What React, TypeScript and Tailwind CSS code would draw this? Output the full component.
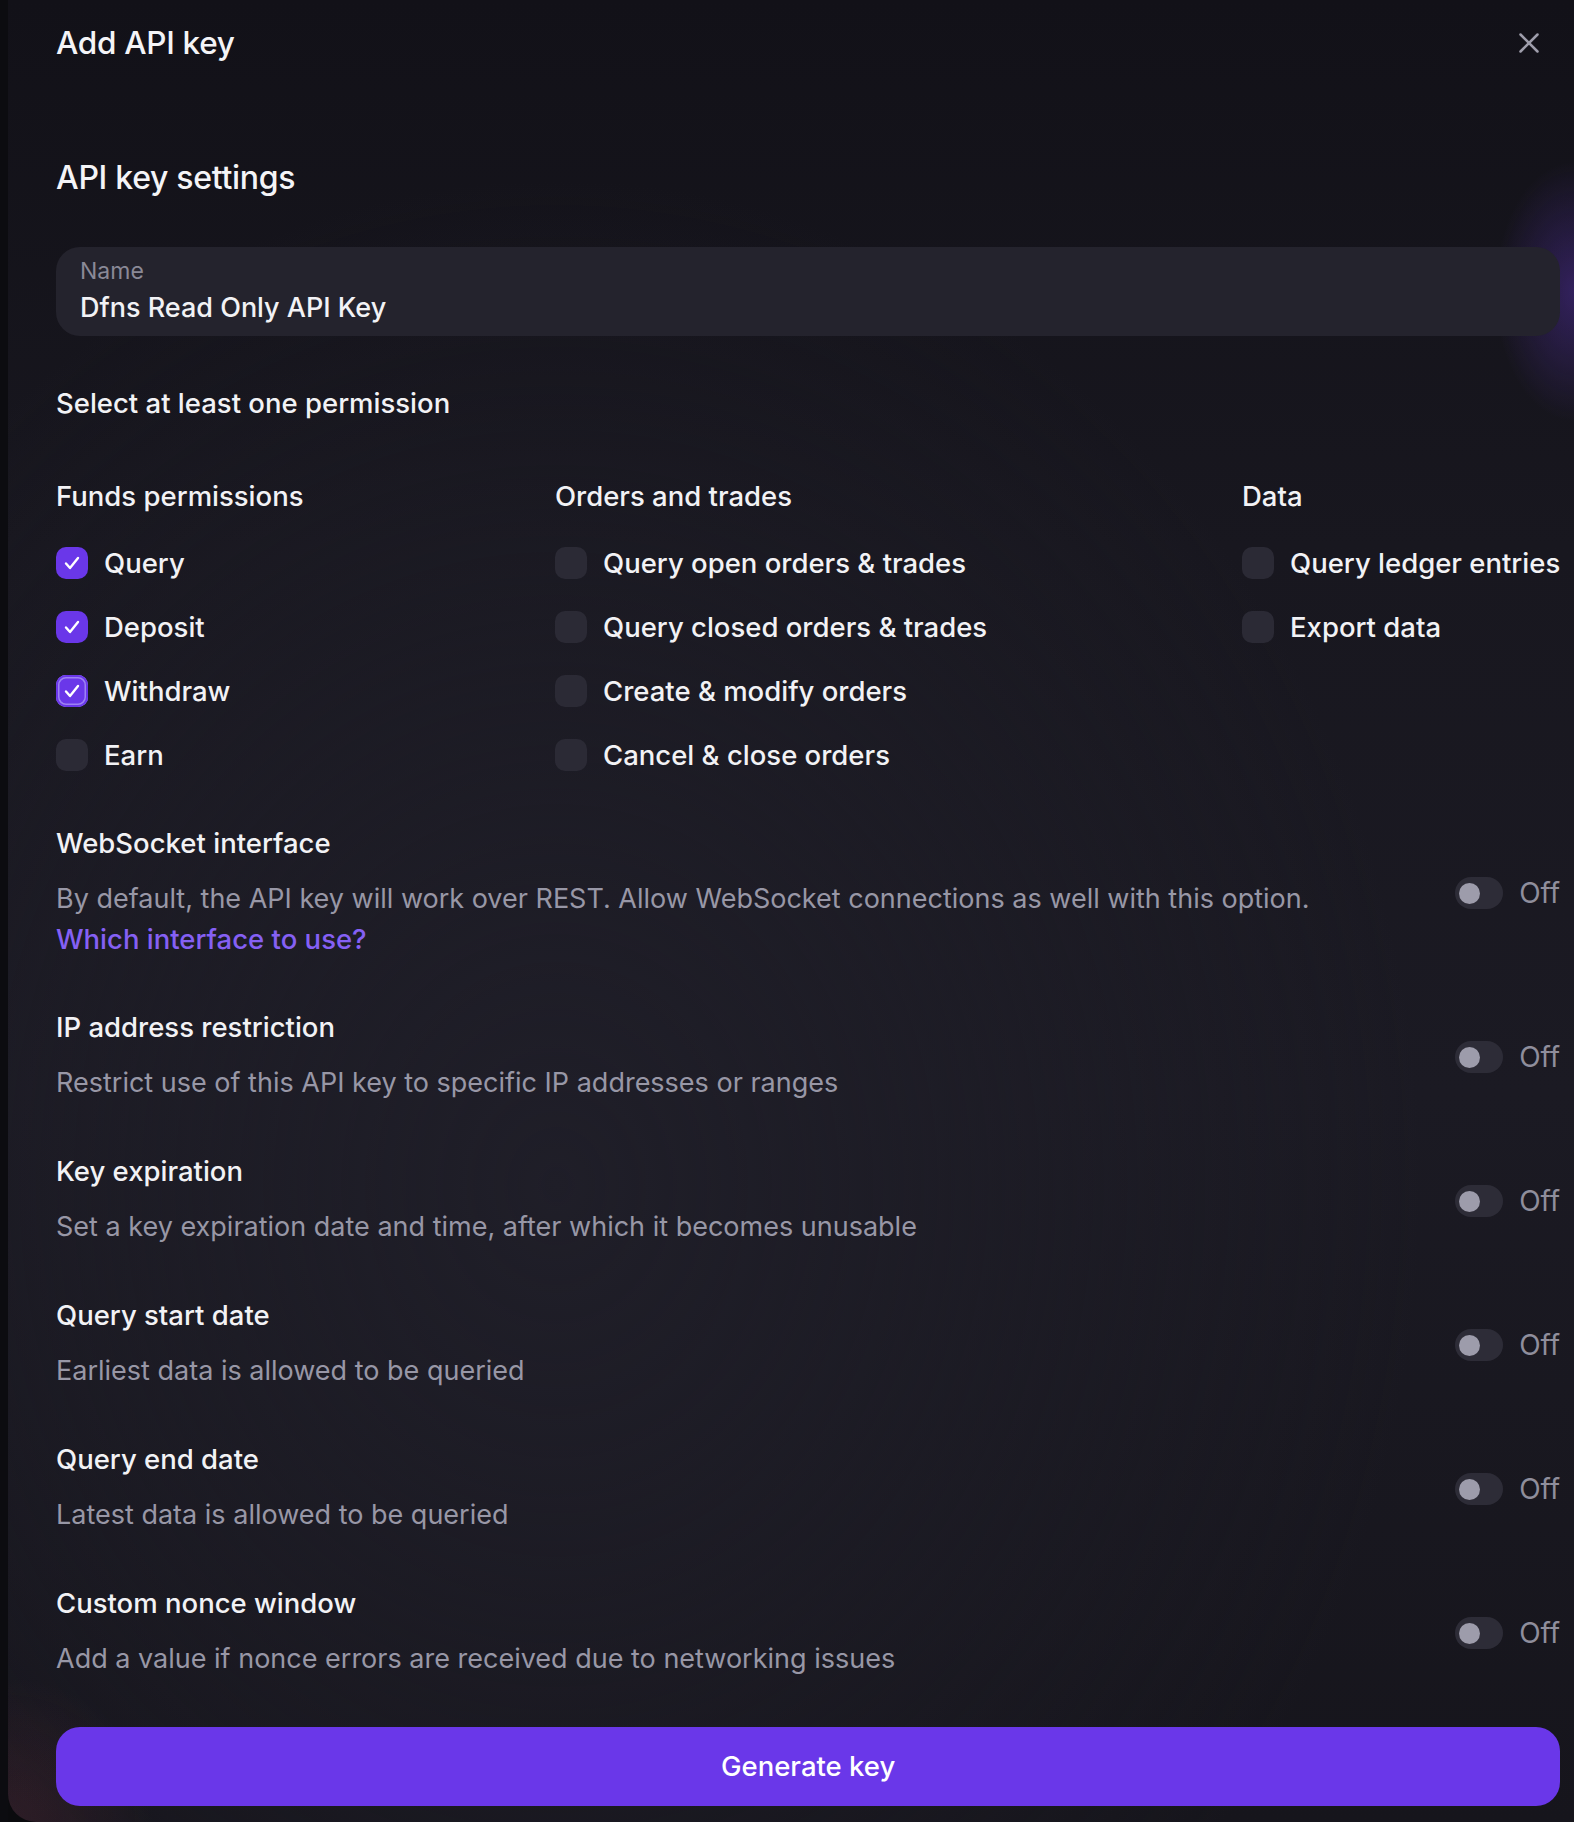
import React from 'react'

const font = { fontFamily: 'Inter, Roboto, "Noto Sans", sans-serif' }

type Perm = { label: string; checked?: boolean; focus?: boolean }

const columns: { title: string; items: Perm[] }[] = [
  {
    title: 'Funds permissions',
    items: [
      { label: 'Query', checked: true },
      { label: 'Deposit', checked: true },
      { label: 'Withdraw', checked: true, focus: true },
      { label: 'Earn' },
    ],
  },
  {
    title: 'Orders and trades',
    items: [
      { label: 'Query open orders & trades' },
      { label: 'Query closed orders & trades' },
      { label: 'Create & modify orders' },
      { label: 'Cancel & close orders' },
    ],
  },
  {
    title: 'Data',
    items: [{ label: 'Query ledger entries' }, { label: 'Export data' }],
  },
]

const options = [
  { title: 'IP address restriction', desc: 'Restrict use of this API key to specific IP addresses or ranges' },
  { title: 'Key expiration', desc: 'Set a key expiration date and time, after which it becomes unusable' },
  { title: 'Query start date', desc: 'Earliest data is allowed to be queried' },
  { title: 'Query end date', desc: 'Latest data is allowed to be queried' },
  { title: 'Custom nonce window', desc: 'Add a value if nonce errors are received due to networking issues' },
]

function Checkbox({ checked, focus }: { checked?: boolean; focus?: boolean }) {
  if (!checked) return <div className="w-8 h-8 rounded-[10px] bg-[#2b2a35] shrink-0" />
  return (
    <div
      className={`w-8 h-8 rounded-[10px] bg-[#6a37e9] shrink-0 flex items-center justify-center ${
        focus ? 'shadow-[inset_0_0_0_2px_#6a37e9,inset_0_0_0_3.5px_#9d82f3]' : ''
      }`}
    >
      <svg width="16" height="14" viewBox="0 0 16 14" fill="none">
        <path d="M2 7.5 L6 12 L14 2" stroke="white" strokeWidth="2.4" strokeLinecap="round" strokeLinejoin="round" />
      </svg>
    </div>
  )
}

function Toggle() {
  return (
    <div className="flex items-center gap-4 shrink-0">
      <div className="w-12 h-8 rounded-full bg-[#2d2c37] flex items-center px-[4px]">
        <div className="w-[21px] h-[21px] rounded-full bg-[#9d9cab]" />
      </div>
      <span className="text-[28px] leading-8 text-[#8f8e9c]">Off</span>
    </div>
  )
}

function Option({ title, desc, link }: { title: string; desc: string; link?: string }) {
  return (
    <div className="flex items-center justify-between">
      <div>
        <div className="text-[27.5px] leading-8 font-medium text-[#f2f2f5]">{title}</div>
        <div className="mt-5 text-[27px] leading-10 text-[#9897a6]">{desc}</div>
        {link && <div className="text-[27.5px] leading-10 font-medium text-[#8560f4]">{link}</div>}
      </div>
      <Toggle />
    </div>
  )
}

export default function App() {
  return (
    <div className="flex w-[1574px] h-[1822px] bg-[#0b0b0e] overflow-hidden" style={font}>
      <div className="w-2 shrink-0 bg-[#0c0c10]" />
      <div className="flex-1 rounded-bl-[28px] pl-12 pr-[15px] pt-[25px] bg-[radial-gradient(ellipse_80px_130px_at_100%_16%,rgba(108,58,220,0.34),transparent),radial-gradient(circle_at_0%_100%,rgba(150,60,80,0.18),transparent_6%),radial-gradient(ellipse_at_35%_65%,#1f1e28,transparent_60%),linear-gradient(180deg,#121118_0%,#18171f_30%,#1b1a23_60%,#16151c_100%)]">
        <div className="flex items-center justify-between">
          <h1 className="text-[31.5px] leading-9 font-medium tracking-[-0.3px] text-[#f4f4f7]">Add API key</h1>
          <svg width="20" height="20" viewBox="0 0 20 20" className="mr-[21px]">
            <path d="M1.5 1.5 L18.5 18.5 M18.5 1.5 L1.5 18.5" stroke="#9e9dab" strokeWidth="2.5" strokeLinecap="round" />
          </svg>
        </div>

        <h2 className="mt-[100px] text-[32px] leading-[34px] font-medium tracking-[-0.3px] text-[#f4f4f7]">API key settings</h2>

        <div className="mt-[52px] h-[89px] rounded-[24px] bg-[#24232d] px-6 pt-3">
          <div className="text-[23px] leading-6 text-[#8a8997]">Name</div>
          <div className="mt-[9px] text-[27px] leading-8 font-medium text-[#f2f2f5]">Dfns Read Only API Key</div>
        </div>

        <div className="mt-[51px] text-[27.5px] leading-8 font-medium text-[#f2f2f5]">Select at least one permission</div>

        <div className="mt-[61px] grid grid-cols-[499px_687px_1fr]">
          {columns.map((col) => (
            <div key={col.title}>
              <div className="text-[27.5px] leading-8 font-medium text-[#f2f2f5]">{col.title}</div>
              <div className="mt-[35px] flex flex-col gap-8">
                {col.items.map((it) => (
                  <div key={it.label} className="flex items-center gap-4">
                    <Checkbox checked={it.checked} focus={it.focus} />
                    <span className="text-[27.5px] leading-8 font-medium text-[#f2f2f5] whitespace-nowrap">{it.label}</span>
                  </div>
                ))}
              </div>
            </div>
          ))}
        </div>

        <div className="mt-14 flex flex-col gap-[52px]">
          <Option
            title="WebSocket interface"
            desc="By default, the API key will work over REST. Allow WebSocket connections as well with this option."
            link="Which interface to use?"
          />
          {options.map((o) => (
            <Option key={o.title} title={o.title} desc={o.desc} />
          ))}
        </div>

        <button className="mt-12 w-full h-[79px] rounded-[24px] bg-[#6a37e9] text-[27.5px] font-medium text-white">
          Generate key
        </button>
      </div>
    </div>
  )
}
